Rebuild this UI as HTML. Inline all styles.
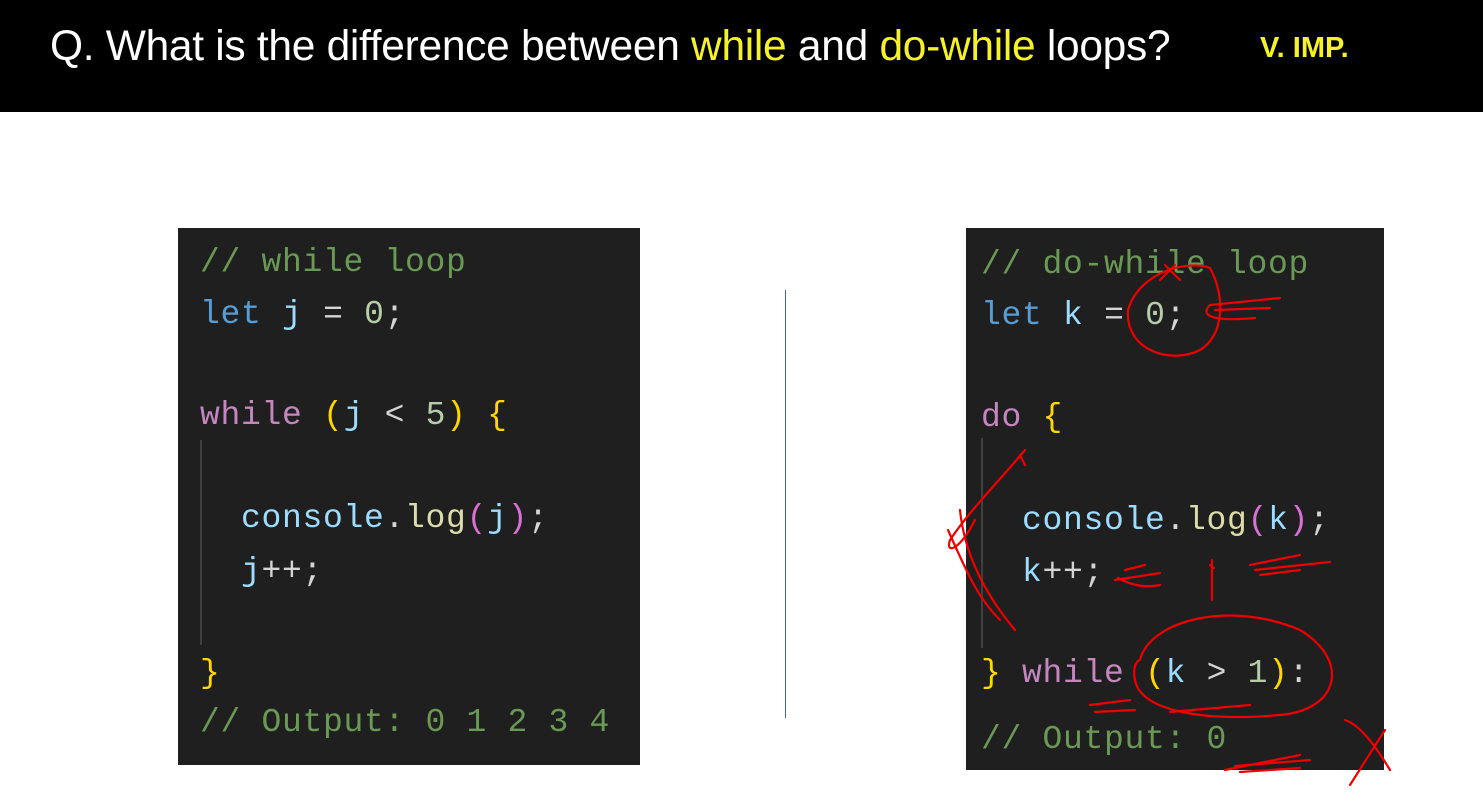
<!DOCTYPE html>
<html><head><style>
body{margin:0;width:1483px;height:794px;background:#fff;position:relative;overflow:hidden;font-family:"Liberation Sans",sans-serif}
.bar{position:absolute;left:0;top:0;width:1483px;height:112px;background:#000}
.t{position:absolute;left:50px;top:23px;color:#fff;font-size:42.5px;white-space:nowrap;letter-spacing:-0.3px}
.y{color:#f5f12a}
.imp{position:absolute;left:1260px;top:32px;color:#f5f12a;font-size:29px;font-weight:bold}
.code{position:absolute;background:#1f1f1f;font-family:"Liberation Mono",monospace;font-size:33px;letter-spacing:0.7px}
.code div{position:absolute;white-space:pre;line-height:40px}
.c{color:#6a9955}.k{color:#569cd6}.v{color:#9cdcfe}.n{color:#b5cea8}.w{color:#d4d4d4}.p{color:#c586c0}.b{color:#ffd700}.f{color:#dcdcaa}.pp{color:#da70d6}
.guide{position:absolute;width:2px;background:#404040}
</style></head><body>
<div class="bar"></div>
<div class="t">Q. What is the difference between <span class="y">while</span> and <span class="y">do-while</span> loops?</div>
<div class="imp">V. IMP.</div>
<div style="position:absolute;left:785px;top:290px;width:1px;height:428px;background:#3f6f80"></div>

<div class="code" style="left:178px;top:228px;width:462px;height:537px">
<div class="c" style="left:22px;top:15px">// while loop</div>
<div style="left:22px;top:67px"><span class="k">let</span> <span class="v">j</span> <span class="w">=</span> <span class="n">0</span><span class="w">;</span></div>
<div style="left:22px;top:168px"><span class="p">while</span> <span class="b">(</span><span class="v">j</span> <span class="w">&lt;</span> <span class="n">5</span><span class="b">)</span> <span class="b">{</span></div>
<div class="guide" style="left:22px;top:212px;height:205px"></div>
<div style="left:63px;top:271px"><span class="v">console</span><span class="w">.</span><span class="f">log</span><span class="pp">(</span><span class="v">j</span><span class="pp">)</span><span class="w">;</span></div>
<div style="left:63px;top:324px"><span class="v">j</span><span class="w">++;</span></div>
<div style="left:22px;top:426px"><span class="b">}</span></div>
<div class="c" style="left:22px;top:475px">// Output: 0 1 2 3 4</div>
</div>

<div class="code" style="left:966px;top:228px;width:418px;height:542px">
<div class="c" style="left:15px;top:17px">// do-while loop</div>
<div style="left:15px;top:68px"><span class="k">let</span> <span class="v">k</span> <span class="w">=</span> <span class="n">0</span><span class="w">;</span></div>
<div style="left:15px;top:170px"><span class="p">do</span> <span class="b">{</span></div>
<div class="guide" style="left:15px;top:210px;height:210px"></div>
<div style="left:56px;top:273px"><span class="v">console</span><span class="w">.</span><span class="f">log</span><span class="pp">(</span><span class="v">k</span><span class="pp">)</span><span class="w">;</span></div>
<div style="left:56px;top:325px"><span class="v">k</span><span class="w">++;</span></div>
<div style="left:15px;top:426px"><span class="b">}</span> <span class="p">while</span> <span class="b">(</span><span class="v">k</span> <span class="w">&gt;</span> <span class="n">1</span><span class="b">)</span><span class="w">:</span></div>
<div class="c" style="left:15px;top:492px">// Output: 0</div>
</div>

<svg style="position:absolute;left:0;top:0" width="1483" height="794" fill="none" stroke="#e00" stroke-width="2.2" stroke-linecap="round">
<path d="M1210 268 C1190 260 1140 270 1128 310 C1125 350 1170 365 1200 350 C1225 335 1225 295 1210 268"/>
<path d="M1160 280 L1175 265 M1165 265 L1180 280"/>
<path d="M1280 298 L1210 305 C1200 315 1210 322 1255 318 M1215 310 L1270 308"/>
<path d="M1025 450 C1000 480 970 510 950 540 C945 555 960 550 975 520 M1020 455 L1025 465 M960 510 C965 560 990 600 1015 630 M948 530 C970 580 980 600 1000 620"/>
<path d="M1115 580 L1160 573 M1118 578 C1130 585 1145 588 1160 585 M1125 570 L1145 565"/>
<path d="M1212 560 L1212 600 M1210 565 L1214 568"/>
<path d="M1250 565 L1300 555 M1255 570 L1330 562 M1260 575 L1300 570"/>
<path d="M1140 660 C1150 620 1230 600 1300 630 C1350 660 1340 710 1280 715 C1200 722 1140 710 1135 680 C1132 665 1138 660 1140 660"/>
<path d="M1090 705 L1130 700 M1095 712 L1135 710 M1170 712 L1250 705"/>
<path d="M1345 720 C1360 725 1375 745 1390 770 M1385 730 L1350 785"/>
<path d="M1225 770 L1300 755 M1235 766 L1310 760 M1240 772 L1300 768"/>
</svg>
</body></html>
